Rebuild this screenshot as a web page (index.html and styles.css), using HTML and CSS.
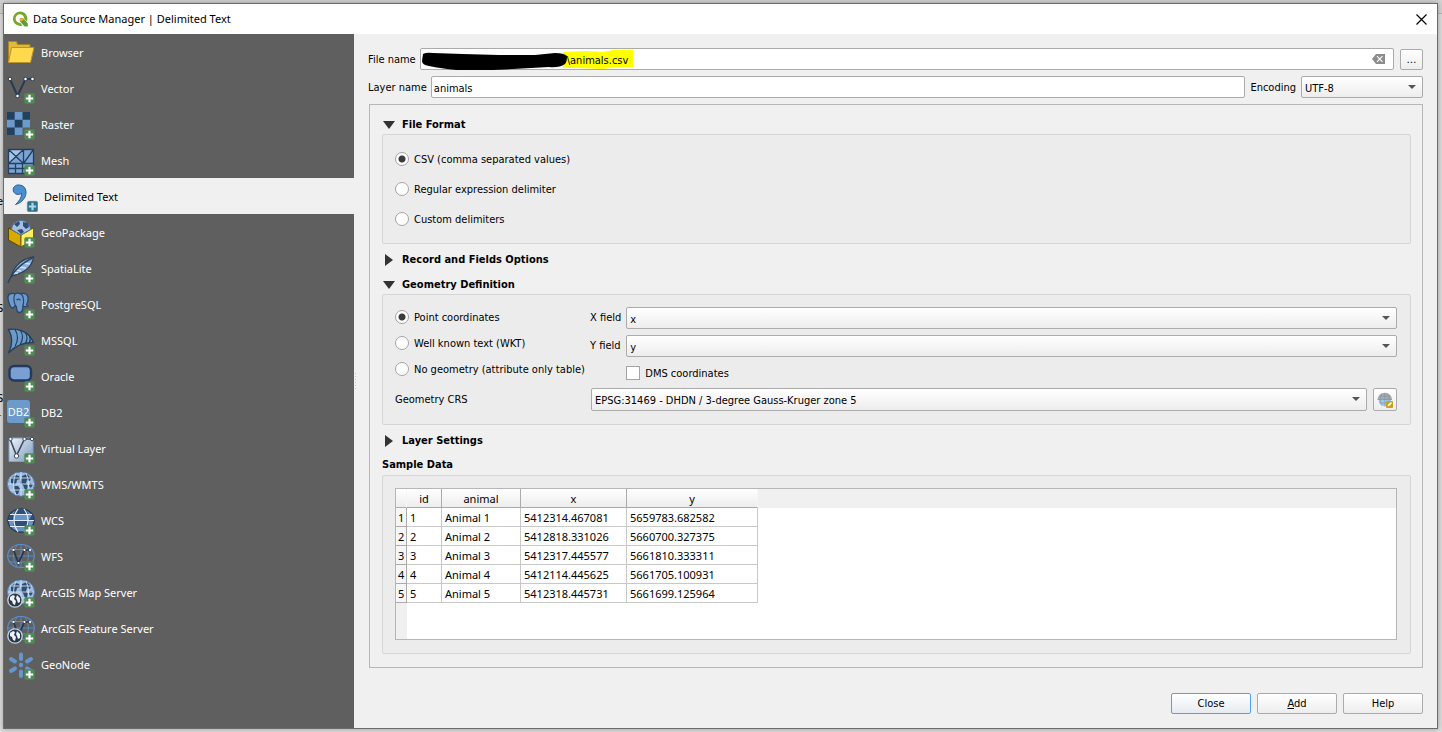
FILE: index.html
```
<!DOCTYPE html>
<html lang="en">
<head>
<meta charset="utf-8">
<title>Data Source Manager | Delimited Text</title>
<link rel="stylesheet" href="styles.css">
</head>
<body>
<svg class="defs" aria-hidden="true">
  <defs>
    <symbol id="plus" viewBox="0 0 11 11">
      <rect x=".3" y=".3" width="10.4" height="10.4" rx="1.6" fill="#508a54"/>
      <path d="M5.5 1.8v7.4M1.8 5.5h7.4" stroke="#fff" stroke-width="2.2"/>
    </symbol>
    <symbol id="globe" viewBox="0 0 28 28">
      <ellipse cx="14" cy="12" rx="13.5" ry="12" fill="#9dbbe0" stroke="#5d86b8" stroke-width="1"/>
      <path d="M4 6l5-3 3 1 1 3-3 1-1 4-2 1-3-2zM7 14l4 0 2 3-2 5-2 0-2-4zM15 4l5-2 4 4-1 3-3-1-1 3 2 3-1 5-2-1-2-5-3-1zM23 11l3 1-2 4-2-2z" fill="#2f4d70"/>
      <path d="M14 0v24M1 12h26M3 6h22M3 18h22M9 1q-5 11 0 22M19 1q5 11 0 22" fill="none" stroke="#d4e2f3" stroke-width="1" opacity=".9"/>
    </symbol>
    <symbol id="wire" viewBox="0 0 28 28">
      <ellipse cx="14" cy="12" rx="13.3" ry="11.6" fill="none" stroke="#5b8bc4" stroke-width="1.3"/>
      <path d="M14 0v24M1 12h26M3 5.500h22M3 18h22M10 1q-7 11 0 22M18 1q7 11 0 22" fill="none" stroke="#5b8bc4" stroke-width="1"/>
      <path d="M6.500 6L11.500 19L17.500 6H23" fill="none" stroke="#26374c" stroke-width="1.700"/>
      <g fill="#fff"><circle cx="6.500" cy="6" r="1.100"/><circle cx="11.500" cy="19" r="1.100"/><circle cx="17.500" cy="6" r="1.100"/><circle cx="23" cy="6" r="1.100"/></g>
    </symbol>
    <symbol id="arc" viewBox="0 0 16 16">
      <circle cx="8" cy="8" r="7.200" fill="#26374c" stroke="#ccd3dc" stroke-width="1.300"/>
      <path d="M3 5l3-2 2 1-1 3 2 2-1 4-2-1-1-3-2-1zM10 3l3 3 0 4-2 1-1-3-1-2z" fill="#eef1f5"/>
    </symbol>
  </defs>
</svg>

<div class="backdrop" aria-hidden="true">
  <span class="scrap scrap-a">e</span><span class="scrap scrap-b">S</span><span class="scrap scrap-c">S</span><span class="scrap scrap-d">r</span>
</div>

<div class="window">
  <header class="titlebar">
    <svg class="logo" viewBox="0 0 16 16" aria-hidden="true">
      <path d="M8 .4a7.500 7.300 0 1 0 2.500 14.300l-2.200-2.800A4.300 4.300 0 1 1 12.200 8l2.600 2.600A7.500 7.400 0 0 0 8 .4z" fill="#76a82c"/>
      <path d="M8 7.200h3.200l4.600 5.300v3h-3.200l-4.600-5z" fill="#5f9e35"/>
      <path d="M7.600 7.200h3.200l1.200 1.400-3 2.200-1.400-1.400z" fill="#f0a43a"/>
    </svg>
    <h1>Data Source Manager | Delimited Text</h1>
    <button class="window-close" type="button" aria-label="Close window">
      <svg viewBox="0 0 11 11" aria-hidden="true"><path d="M.5.5l10 10M10.500.5l-10 10" stroke="#000" stroke-width="1.200"/></svg>
    </button>
  </header>

  <div class="content">
    <nav class="sidebar" aria-label="Source types">
      <a href="#browser"><svg viewBox="0 0 28 28"><path d="M1.500 22.500V1.500H9.500L10.500 4.500H23V22.500z" fill="#e0b93c" stroke="#a98720"/><path d="M1.500 22.500L4.500 7.500H27L23.500 22.500z" fill="#ffd94d" stroke="#b8952b"/></svg>Browser</a>
      <a href="#vector"><svg viewBox="0 0 28 28"><path d="M3 3L10.500 20L18.500 3H25.500" fill="none" stroke="#2a3b50" stroke-width="2"/><g fill="#fff" stroke="#2a3b50"><circle cx="3" cy="3" r="1.800"/><circle cx="10.500" cy="20" r="1.800"/><circle cx="18.500" cy="3" r="1.800"/><circle cx="25.500" cy="3" r="1.800"/></g><use href="#plus" x="17" y="17" width="11" height="11"/></svg>Vector</a>
      <a href="#raster"><svg viewBox="0 0 28 28"><path d="M0 0h23v15.500h-7.500V23H0z" fill="#6c9aca"/><path d="M0 0h7.700v7.700H0zM15.500 0h7.500v7.700h-7.500zM7.700 7.700h7.800v7.800H7.700zM0 15.500h7.700V23H0z" fill="#24405f"/><use href="#plus" x="17" y="17" width="11" height="11"/></svg>Raster</a>
      <a href="#mesh"><svg viewBox="0 0 28 28"><path d="M1.500 1.500h25v24h-25z" fill="#7ba3d3"/><path d="M2 2h14L2 15z" fill="#a8c5e8"/><path d="M1.500 1.500h25v24h-25zM1.500 15.500h25M16.500 1.500v14M8.500 15.500v10M15.500 15.500v10M1.500 20.500h25M1.500 1.500l15 14M16.500 1.500l-15 14M26.500 1.500l-10 14" fill="none" stroke="#24405f" stroke-width="1.300"/><use href="#plus" x="17" y="17" width="11" height="11"/></svg>Mesh</a>
      <a href="#delimited" class="selected" aria-current="page"><svg viewBox="0 0 28 28"><path d="M9.500 1C5.500.5 3 3 3.200 6s3 5 6 4.300c1.500-.3 2-.8 2.500-1.300C11.500 14 9 17.500 5.500 20.500C12.500 18.500 16.500 13 16 7.500C15.700 3.700 13 1.200 9.500 1z" fill="#4a8fd0" stroke="#286296" stroke-width="1"/><rect x="17.300" y="17.300" width="10.400" height="10.400" rx="1.600" fill="#2e7188" stroke="#58898f" stroke-width=".6"/><path d="M22.500 18.800v7.400M18.800 22.500h7.400" stroke="#a9d7ee" stroke-width="2.200"/></svg>Delimited Text</a>
      <a href="#geopackage"><svg viewBox="0 0 28 28"><path d="M1.500 8L14 3L26.500 8v11L14 27L1.500 20z" fill="#6d5c1b"/><path d="M1.500 8L14 15v12L1.500 20z" fill="#d9a900" stroke="#5c4900"/><path d="M26.500 8L14 15v12l12.500-8z" fill="#ffee62" stroke="#6a6214"/><path d="M4.500 9.500a9.500 9 0 1 1 19 0L14 15z" fill="#a5bfe2" stroke="#50749f"/><path d="M7 4l5-3 1 3-3 3zM16 2l5 1 1 4-3 2-3-3zM10 10l5-1 2 3-3 2z" fill="#2f4d70"/><use href="#plus" x="17" y="17" width="11" height="11"/></svg>GeoPackage</a>
      <a href="#spatialite"><svg viewBox="0 0 28 28"><path d="M26.500 1C17 2 7 9 4.500 20C13 18 25 13 26.500 1z" fill="#8db1df" stroke="#29435f" stroke-width="1.300"/><path d="M9 14l5 1M12 11l7 1M16 7l7 1M7 17l4 0" stroke="#d3e2f4" stroke-width="1.400"/><path d="M25.500 2Q7 11 1 27" fill="none" stroke="#29435f" stroke-width="1.400"/><use href="#plus" x="17" y="17" width="11" height="11"/></svg>SpatiaLite</a>
      <a href="#postgresql"><svg viewBox="0 0 28 28"><path d="M4 1.500C.5 2 .3 6 2 11c1 3 2 5 3.500 5s2-2 2.800-2.500l1 .8C10 17 9 20.500 12.500 20.500S15.800 17 16 14c2 1 3.500 1 5 0c-1-.8-1.500-1-1.500-1.500C21.500 9 22 4 19 2c-2-1-4-.8-5.500-.2C11 .8 9.500 1 8 1.800C7 1.300 5.500 1.200 4 1.500z" fill="#6c9aca" stroke="#29466b" stroke-width="1.300"/><path d="M8 2C6.500 5 6.500 9 8.300 13.500M14 2c3 2 3 8 2 12M9.500 8c2-1.500 3-1 4 .5" fill="none" stroke="#29466b" stroke-width="1.200"/><use href="#plus" x="17" y="17" width="11" height="11"/></svg>PostgreSQL</a>
      <a href="#mssql"><svg viewBox="0 0 28 28"><path d="M1.500 1.500C10 0 22 3 26.500 14.500C17 14 8 18 1.500 25C6 16 6 9 1.500 1.500z" fill="#6c9aca" stroke="#24405f" stroke-width="1.400"/><path d="M8 1.500q5 8 0 17M13.500 2.500q4 6 0 13.500M18.500 5q3 5 0 10M22.500 8.500q1.500 3 0 6" fill="none" stroke="#24405f" stroke-width="1.200"/><use href="#plus" x="17" y="17" width="11" height="11"/></svg>MSSQL</a>
      <a href="#oracle"><svg viewBox="0 0 28 28"><rect x="2.500" y="2" width="21.500" height="14.500" rx="4.500" fill="#7a9fd2" stroke="#213b60" stroke-width="2.400"/><use href="#plus" x="17" y="17" width="11" height="11"/></svg>Oracle</a>
      <a href="#db2"><svg viewBox="0 0 28 28"><rect width="23" height="23" rx="3" fill="#6c9aca"/><text x="11.500" y="16" text-anchor="middle" class="db2-label">DB2</text><use href="#plus" x="17" y="17" width="11" height="11"/></svg>DB2</a>
      <a href="#virtual"><svg viewBox="0 0 28 28"><defs><linearGradient id="vg" x1="0" y1="0" x2="1" y2="1"><stop offset="0" stop-color="#f3f6fa"/><stop offset="1" stop-color="#7898bd"/></linearGradient></defs><path d="M2 2h24v23.500H2z" fill="url(#vg)" stroke="#7ea3cc"/><path d="M3 3L9.500 19.500L17.500 3H25" fill="none" stroke="#3d4c5c" stroke-width="1.600"/><g fill="#fff" stroke="#3d4c5c"><circle cx="3.500" cy="3" r="1.700"/><circle cx="9.500" cy="20" r="2.200"/><circle cx="17.500" cy="3" r="1.700"/><circle cx="25" cy="3" r="1.700"/></g><use href="#plus" x="17" y="17" width="11" height="11"/></svg>Virtual Layer</a>
      <a href="#wms"><svg viewBox="0 0 28 28"><use href="#globe" width="28" height="28"/><use href="#plus" x="17" y="17" width="11" height="11"/></svg>WMS/WMTS</a>
      <a href="#wcs"><svg viewBox="0 0 28 28"><ellipse cx="14" cy="12.500" rx="13" ry="11.700" fill="#6593c6" stroke="#1f3550" stroke-width="1.300"/><path d="M9 1.500h10l3 5H6zM6.500 12.500h15v5.500h-15zM1.500 12.500h5V7H3zM21.500 12.500h5V7H25z" fill="#2d4e78"/><path d="M1 12.500h26M3 6.500h22M3 18.500h22M11 1Q3 12 11 24M17 1Q25 12 17 24" fill="none" stroke="#e3edf8" stroke-width="1.200"/><use href="#plus" x="17" y="17" width="11" height="11"/></svg>WCS</a>
      <a href="#wfs"><svg viewBox="0 0 28 28"><use href="#wire" width="28" height="28"/><use href="#plus" x="17" y="17" width="11" height="11"/></svg>WFS</a>
      <a href="#arcgis-map"><svg viewBox="0 0 28 28"><use href="#globe" width="28" height="28"/><use href="#arc" x="0" y="12" width="16" height="16"/><use href="#plus" x="17" y="17" width="11" height="11"/></svg>ArcGIS Map Server</a>
      <a href="#arcgis-feature"><svg viewBox="0 0 28 28"><use href="#wire" width="28" height="28"/><use href="#arc" x="0" y="12" width="16" height="16"/><use href="#plus" x="17" y="17" width="11" height="11"/></svg>ArcGIS Feature Server</a>
      <a href="#geonode"><svg viewBox="0 0 28 28"><g stroke="#6496cf" stroke-width="4" stroke-linecap="round"><path d="M14 2.500v4.500M14 19.500v4.500M4 7l4 2.500M20 16.500l4 2.500M4 19l4-2.500M20 9.500l4-2.500"/></g><circle cx="14" cy="13" r="2.200" fill="#6496cf"/><use href="#plus" x="17" y="17" width="11" height="11"/></svg>GeoNode</a>
    </nav>

    <div class="splitter" aria-hidden="true"></div>

    <form class="main">
      <div class="row">
        <label for="file">File name</label>
        <div class="file-box">
          <svg class="marker" viewBox="0 0 214 22" aria-hidden="true">
            <path d="M143 4l22-1 18 1 10-2 20 0v17l-12 0-18 2-26-1-14 0z" fill="#ff0"/>
            <path d="M3 6q3-2 10-1l30 1 36 1 36 0 20-2q9 0 12 3q0 6-2 8q-6 4-16 3l-36 2-40 2q-26-1-44-5q-7-1-7-5z" fill="#000"/>
          </svg>
          <input id="file" type="text" value="\animals.csv">
          <button class="clear" type="button" aria-label="Clear file name">
            <svg viewBox="0 0 13 10" aria-hidden="true"><path d="M4 0h9v10H4L0 5z" fill="#8d8d8d"/><path d="M5 2.200l5.500 5.600M10.500 2.200L5 7.800" stroke="#fff" stroke-width="1.100"/></svg>
          </button>
        </div>
        <button class="btn browse" type="button" aria-label="Browse for file">…</button>
      </div>

      <div class="row">
        <label for="layer">Layer name</label>
        <input id="layer" class="field" type="text" value="animals">
        <label for="enc" class="enc-label">Encoding</label>
        <div class="select enc"><select id="enc"><option>UTF-8</option></select></div>
      </div>

      <div class="panel">
        <h2><button type="button" aria-expanded="true" class="toggle open">File Format</button></h2>
        <div class="group formats">
          <label class="choice"><input type="radio" name="format" checked>CSV (comma separated values)</label>
          <label class="choice"><input type="radio" name="format">Regular expression delimiter</label>
          <label class="choice"><input type="radio" name="format">Custom delimiters</label>
        </div>

        <h2 class="spaced"><button type="button" aria-expanded="false" class="toggle">Record and Fields Options</button></h2>

        <h2 class="spaced"><button type="button" aria-expanded="true" class="toggle open">Geometry Definition</button></h2>
        <div class="group geometry">
          <div class="geo-top">
            <div class="geo-types">
              <label class="choice"><input type="radio" name="geom" checked>Point coordinates</label>
              <label class="choice"><input type="radio" name="geom">Well known text (WKT)</label>
              <label class="choice"><input type="radio" name="geom">No geometry (attribute only table)</label>
            </div>
            <div class="geo-fields">
              <label for="xf">X field</label>
              <div class="select"><select id="xf"><option>x</option></select></div>
              <label for="yf">Y field</label>
              <div class="select"><select id="yf"><option>y</option></select></div>
              <label class="choice dms"><input type="checkbox">DMS coordinates</label>
            </div>
          </div>
          <div class="crs">
            <label for="crs">Geometry CRS</label>
            <div class="select"><select id="crs"><option>EPSG:31469 - DHDN / 3-degree Gauss-Kruger zone 5</option></select></div>
            <button class="btn crs-btn" type="button" aria-label="Select CRS">
              <svg viewBox="0 0 16 16" aria-hidden="true">
                <path d="M.5 8a7.300 7.300 0 0 1 14.600 0z" fill="#a4aab0"/><path d="M1.500 8a6.300 6.300 0 0 0 12.600 0z" fill="#9cc8f0"/>
                <path d="M7.800 1v13.500M.5 7.500h14.600M2.500 4h10.500M2.500 11h10M5 1.500q-3.500 6 0 12M10.500 1.500q3.500 6 0 12" fill="none" stroke="#7c8c9c" stroke-width=".5"/>
                <rect x="9" y="9" width="7" height="7" rx="1" fill="#c8a21c"/><path d="M10.500 14.500l1-2.500 2.500-2 1 1-2 2.500z" fill="#fff8d8"/>
              </svg>
            </button>
          </div>
        </div>

        <h2 class="spaced"><button type="button" aria-expanded="false" class="toggle">Layer Settings</button></h2>

        <h2 class="spaced sample-title">Sample Data</h2>
        <div class="group sample">
          <div class="table-frame">
            <table>
              <colgroup><col class="c-num"><col class="c-id"><col class="c-animal"><col class="c-x"><col class="c-y"></colgroup>
              <thead><tr><td class="corner"></td><th scope="col">id</th><th scope="col">animal</th><th scope="col">x</th><th scope="col">y</th></tr></thead>
              <tbody>
                <tr><th scope="row">1</th><td>1</td><td>Animal 1</td><td>5412314.467081</td><td>5659783.682582</td></tr>
                <tr><th scope="row">2</th><td>2</td><td>Animal 2</td><td>5412818.331026</td><td>5660700.327375</td></tr>
                <tr><th scope="row">3</th><td>3</td><td>Animal 3</td><td>5412317.445577</td><td>5661810.333311</td></tr>
                <tr><th scope="row">4</th><td>4</td><td>Animal 4</td><td>5412114.445625</td><td>5661705.100931</td></tr>
                <tr><th scope="row">5</th><td>5</td><td>Animal 5</td><td>5412318.445731</td><td>5661699.125964</td></tr>
              </tbody>
            </table>
          </div>
        </div>
      </div>

      <div class="actions">
        <button class="btn primary" type="button">Close</button>
        <button class="btn" type="button"><span><u>A</u>dd</span></button>
        <button class="btn" type="button">Help</button>
      </div>
    </form>
  </div>
</div>
</body>
</html>
```
FILE: styles.css
```
* { box-sizing: border-box; }

body {
  margin: 0;
  min-height: 100vh;
  padding: 3px 4px 3px 3px;
  display: flex;
  background: #dcdcdc;
  color: #000;
  font: 11px/14px "DejaVu Sans Condensed", "DejaVu Sans", sans-serif;
}

.defs { position: absolute; width: 0; height: 0; }

button, input, select { font: inherit; color: inherit; margin: 0; }
button { padding: 0; }

/* Slivers of the application behind the dialog */
.backdrop {
  position: absolute;
  inset: 0;
  overflow: hidden;
  background: linear-gradient(#d2d2d2 0 13px, #b4b4b4 13px 14px, #dcdcdc 14px);
}
.scrap { position: absolute; left: -3px; }
.scrap-a { top: 195px; }
.scrap-b { top: 302px; }
.scrap-c { top: 392px; }
.scrap-d { top: 411px; color: #a02020; }

.window {
  position: relative;
  flex: 1;
  display: flex;
  flex-direction: column;
  border: 1px solid #6b6b6b;
  background: #f0f0f0;
  box-shadow: 0 0 5px rgba(0, 0, 0, .3);
}

.titlebar {
  display: flex;
  align-items: center;
  height: 30px;
  padding: 0 10px 0 8px;
  background: #fff;
}
.logo { width: 16px; height: 16px; margin-right: 5px; }
.titlebar h1 {
  flex: 1;
  margin: 0;
  font: 11px/16px "Noto Sans", sans-serif;
}
.window-close {
  display: flex;
  border: 0;
  background: none;
}
.window-close svg { width: 11px; height: 11px; }

.content { flex: 1; display: flex; }

.sidebar {
  flex: none;
  width: 350px;
  background: #5f5f5f;
  font: 11px/16px "Noto Sans", sans-serif;
}
.sidebar a {
  display: flex;
  align-items: center;
  height: 36px;
  padding: 2px 3px 0;
  gap: 6px;
  color: #fff;
  text-decoration: none;
}
.sidebar svg { width: 28px; height: 28px; margin-top: 2px; }
.sidebar a.selected {
  padding-left: 6px;
  background: #f0f0f0;
  color: #000;
}
.db2-label { font: 11px "Open Sans", sans-serif; fill: #fff; }

.splitter {
  width: 3px;
  height: 16px;
  align-self: center;
  background: repeating-linear-gradient(#c4c4c4 0 1px, transparent 1px 3px) center / 1px 100% no-repeat;
}

.main {
  flex: 1;
  display: flex;
  flex-direction: column;
  padding: 14px 14px 14px 11px;
}

.row { display: flex; align-items: center; height: 22px; }
.row + .row { margin-top: 6px; }
.row label { padding-top: 2px; }

.file-box {
  position: relative;
  flex: 1;
  display: flex;
  height: 22px;
  margin: 0 6px 0 4px;
  border: 1px solid #ababab;
  border-radius: 2px;
  background: #fff;
}
.file-box input {
  position: relative;
  flex: 1;
  width: 100%;
  padding: 4px 4px 1px 146px;
  border: 0;
  background: none;
}
.marker { position: absolute; left: -1px; top: -1px; width: 214px; height: 22px; }
.clear {
  display: flex;
  align-items: center;
  margin-right: 8px;
  border: 0;
  background: none;
}
.clear svg { width: 13px; height: 10px; }

.btn {
  height: 21px;
  padding-top: 1px;
  border: 1px solid #ababab;
  border-radius: 2px;
  background: linear-gradient(#fff, #ededed);
}
.browse { width: 23px; }

.field {
  flex: 1;
  height: 22px;
  margin: 0 5px 0 4px;
  padding: 3px 2px 1px;
  border: 1px solid #ababab;
  border-radius: 2px;
  background: #fff;
}
.enc-label { margin-right: 5px; }

.select { position: relative; height: 22px; }
.select select {
  appearance: none;
  display: block;
  width: 100%;
  height: 100%;
  padding: 3px 20px 0 3px;
  border: 1px solid #ababab;
  border-radius: 2px;
  background: linear-gradient(#fff, #ededed);
}
.select::after {
  content: "";
  position: absolute;
  right: 7px;
  top: 9px;
  border: solid transparent;
  border-width: 4px 4px 0;
  border-top-color: #555;
  pointer-events: none;
}
.enc { width: 122px; }

.panel {
  flex: 1;
  display: flex;
  flex-direction: column;
  margin: 6px 0 0 1px;
  padding: 9px 11px 13px 12px;
  border: 1px solid #b6b6b6;
}

h2 { margin: 0; font: bold 11px/20px "DejaVu Sans Condensed", "DejaVu Sans", sans-serif; }
h2.spaced { margin-top: 5px; }
.toggle {
  display: flex;
  align-items: center;
  height: 20px;
  padding-top: 2px;
  border: 0;
  background: none;
  font: inherit;
}
.toggle::before {
  content: "";
  width: 8px;
  height: 12px;
  margin: 0 9px 0 3px;
  background: #333;
  clip-path: polygon(0 0, 100% 50%, 0 100%);
}
.toggle.open::before {
  width: 12px;
  height: 8px;
  margin: 0 7px 0 1px;
  clip-path: polygon(0 0, 100% 0, 50% 100%);
}

.group {
  border: 1px solid #d6d6d6;
  border-radius: 2px;
  background: #ececec;
}

.choice {
  display: flex;
  align-items: center;
  height: 16px;
  padding-top: 2px;
  white-space: nowrap;
}
.choice input {
  appearance: none;
  width: 14px;
  height: 14px;
  margin: 0 5px 2px 0;
  border: 1px solid #a4a4a4;
  background: #fff;
}
.choice input[type="radio"] { border-radius: 50%; }
.choice input[type="radio"]:checked { background: radial-gradient(circle, #3c3c3c 3px, #fff 4px); }

.formats {
  display: flex;
  flex-direction: column;
  gap: 14px;
  padding: 16px 12px;
}

.geometry { padding: 12px 13px 13px 12px; }
.geo-top { display: flex; }
.geo-types {
  flex: none;
  width: 195px;
  display: flex;
  flex-direction: column;
  gap: 10px;
  padding-top: 2px;
}
.geo-fields {
  flex: 1;
  display: grid;
  grid-template-columns: auto 1fr;
  gap: 6px 5px;
  align-items: center;
}
.dms { grid-column: 2; height: 20px; }

.crs { display: flex; align-items: center; margin-top: 5px; }
.crs > label { width: 196px; }
.crs .select { flex: 1; height: 23px; }
.crs-btn {
  display: flex;
  align-items: center;
  justify-content: center;
  width: 24px;
  height: 23px;
  margin-left: 6px;
}
.crs-btn svg { width: 16px; height: 16px; }

.sample-title { line-height: 20px; }
.sample {
  flex: 1;
  display: flex;
  padding: 12px 13px 13px 12px;
}
.table-frame {
  flex: 1;
  min-height: 140px;
  border: 1px solid #b6b6b6;
  background:
    linear-gradient(#f0f0f0, #f0f0f0) 0 0 / 11px 100% no-repeat,
    linear-gradient(#f0f0f0, #f0f0f0) 0 0 / 100% 19px no-repeat,
    #fff;
}
table {
  table-layout: fixed;
  width: 362px;
  border-collapse: separate;
  border-spacing: 0;
  font: 11px/16px "Noto Sans", sans-serif;
}
.c-num { width: 11px; }
.c-id { width: 35px; }
.c-animal { width: 79px; }
.c-x { width: 106px; }
.c-y { width: 131px; }
th, td {
  height: 19px;
  padding: 1px 3px 0;
  border: solid #c8c8c8;
  border-width: 0 1px 1px 0;
  font-weight: normal;
  text-align: left;
  white-space: nowrap;
}
thead th, thead td {
  border-color: #ababab;
  background: linear-gradient(#fff, #ededed);
  text-align: center;
}
thead .corner, thead th:last-child { border-right-color: #f6f6f6; }
tbody th { padding: 1px 2px 0; border-color: #ababab; background: #f6f6f6; }

.actions {
  display: flex;
  justify-content: flex-end;
  gap: 6px;
  margin-top: 25px;
}
.actions .btn { width: 80px; }
.primary {
  border-color: #4aa5ef;
  background: linear-gradient(#fff, #e6ebf1);
}
```
